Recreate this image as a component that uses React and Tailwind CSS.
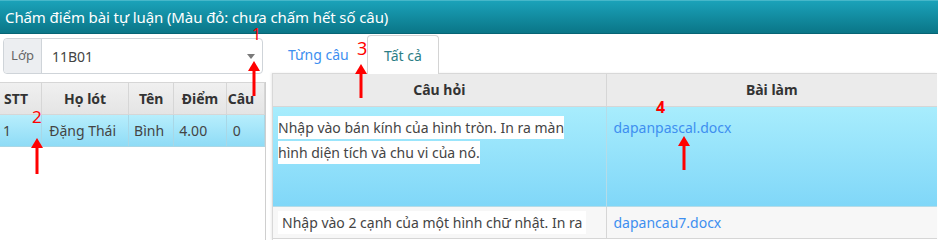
import React from "react";

function Arrow({ x, top, bottom }) {
  // red annotation arrow pointing up
  return (
    <svg
      className="absolute pointer-events-none"
      style={{ left: x - 7, top: top }}
      width="14"
      height={bottom - top}
      viewBox={`0 0 14 ${bottom - top}`}
    >
      <polygon points="7,0 13,10 1,10" fill="#ff0000" />
      <rect x="5.5" y="9" width="3" height={bottom - top - 9} fill="#ff0000" />
    </svg>
  );
}

function Num({ children, className }) {
  return (
    <span className={`absolute text-[#ff0000] leading-none font-['Noto_Sans',sans-serif] ${className}`}>
      {children}
    </span>
  );
}

export default function App() {
  const students = [{ stt: 1, ho: "Đặng Thái", ten: "Bình", diem: "4.00", cau: "0" }];

  return (
    <div className="relative w-[940px] h-[240px] overflow-hidden bg-white font-['Noto_Sans',sans-serif] text-[#333]">
      {/* Title bar */}
      <div className="h-[34px] flex items-center pl-[5px] mr-[2px] bg-gradient-to-b from-[#1aa2b9] to-[#0a7688] border-t border-[#46b7c9] border-b border-b-[#066474] text-white text-[15px] tracking-[-0.1px]">
        Chấm điểm bài tự luận (Màu đỏ: chưa chấm hết số câu)
      </div>

      <div className="flex h-[206px]">
        {/* Left panel */}
        <div className="w-[268px] flex flex-col shrink-0">
          <div className="ml-[3px] mt-[4px] w-[260px] h-[36px] flex border border-[#cfd4d9] rounded-[4px] text-[14px]">
            <div className="w-[38px] flex items-center justify-center bg-[#eceef1] border-r border-[#cfd4d9] text-[#666] text-[13px] rounded-l-[4px]">
              Lớp
            </div>
            <div className="flex-1 flex items-center justify-between pl-[10px] pr-[7px] text-[#444]">
              <span>11B01</span>
              <span className="w-0 h-0 border-l-[4px] border-r-[4px] border-t-[5px] border-l-transparent border-r-transparent border-t-[#7a7a7a]" />
            </div>
          </div>

          <div className="mt-[8px] w-[266px] flex-1 border-r border-[#cfcfcf] overflow-hidden">
            <table className="border-collapse text-[14px] whitespace-nowrap">
              <thead>
                <tr className="h-[32px] bg-gradient-to-b from-[#f0f0f0] to-[#e4e4e4]">
                  <th className="w-[44px] border border-[#d6d6d6] border-l-0 text-left pl-[4px] font-bold text-[#333]">STT</th>
                  <th className="w-[89px] border border-[#d6d6d6] font-bold text-[#333]">Họ lót</th>
                  <th className="w-[47px] border border-[#d6d6d6] font-bold text-[#333]">Tên</th>
                  <th className="w-[55px] border border-[#d6d6d6] font-bold text-[#333]">Điểm</th>
                  <th className="w-[40px] border border-[#d6d6d6] font-bold text-[#333] text-left pl-[1px]">Câu</th>
                </tr>
              </thead>
              <tbody>
                {students.map((s) => (
                  <tr key={s.stt} className="h-[32px] bg-gradient-to-b from-[#b7eefc] to-[#8ddbf6] text-[#444]">
                    <td className="border border-[#a9d7e6] border-l-0 pl-[3px]">{s.stt}</td>
                    <td className="border border-[#a9d7e6] pl-[7px]">{s.ho}</td>
                    <td className="border border-[#a9d7e6] pl-[5px]">{s.ten}</td>
                    <td className="border border-[#a9d7e6] pl-[5px]">{s.diem}</td>
                    <td className="border border-[#a9d7e6] pl-[6px]">{s.cau}</td>
                  </tr>
                ))}
              </tbody>
            </table>
          </div>
        </div>

        {/* Right panel */}
        <div className="flex-1 flex flex-col pl-[4px] pr-[3px]">
          <div className="h-[39px] flex items-end pl-[10px] text-[14px]">
            <div className="h-[38px] w-[85px] flex items-center pl-[6px] text-[#3d8ff0]">Từng câu</div>
            <div className="h-[39px] w-[72px] flex items-center justify-center bg-white border border-[#d4d4d4] border-b-0 rounded-t-[4px] text-[#2c7e86] relative top-[1px]">
              Tất cả
            </div>
          </div>
          <div className="flex-1 border-t border-l border-[#d8d8d8] shadow-[-1px_0_2px_rgba(0,0,0,0.08)] overflow-hidden">
            <table className="w-full border-collapse text-[14px] table-fixed">
              <thead>
                <tr className="h-[32px] bg-[#ebebeb]">
                  <th className="w-[333px] border-r border-b border-[#d6d6d6] font-bold text-[#333]">Câu hỏi</th>
                  <th className="border-b border-[#d6d6d6] font-bold text-[#333]">Bài làm</th>
                </tr>
              </thead>
              <tbody>
                <tr className="h-[100px] bg-gradient-to-b from-[#a8edfd] to-[#80d7f8] align-top">
                  <td className="border-r border-b border-[#b5dce8] pl-[5px] pt-[8px] pr-[18px] leading-[25px]">
                    <span className="bg-white text-[#444] py-[2px] box-decoration-clone">
                      {" "}Nhập vào bán kính của hình tròn. In ra màn hình diện tích và chu vi của nó.
                    </span>
                  </td>
                  <td className="border-b border-[#b5dce8] pl-[7px] pt-[8px] leading-[25px]">
                    <span className="text-[#3e8ff0]">dapanpascal.docx</span>
                  </td>
                </tr>
                <tr className="h-[32px] bg-[#f7f7f7]">
                  <td className="border-r border-b border-[#d6d6d6] pl-[5px] whitespace-nowrap overflow-hidden">
                    <span className="bg-white text-[#444] px-[4px] py-[2px]">Nhập vào 2 cạnh của một hình chữ nhật. In ra</span>
                  </td>
                  <td className="border-b border-[#d6d6d6] pl-[7px]">
                    <span className="text-[#3e8ff0]">dapancau7.docx</span>
                  </td>
                </tr>
              </tbody>
            </table>
          </div>
        </div>
      </div>

      {/* Red annotations */}
      <Num className="left-[252px] top-[26px] text-[16px]">1</Num>
      <Arrow x={254} top={61} bottom={96} />
      <Num className="left-[32px] top-[108px] text-[17px]">2</Num>
      <Arrow x={37} top={138} bottom={174} />
      <Num className="left-[357px] top-[39px] text-[18px]">3</Num>
      <Arrow x={361} top={64} bottom={98} />
      <Num className="left-[656px] top-[99px] text-[16px] font-bold">4</Num>
      <Arrow x={684} top={136} bottom={170} />
    </div>
  );
}
